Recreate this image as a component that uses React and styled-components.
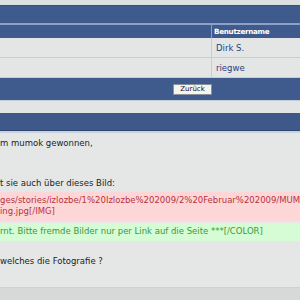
import React from "react";
import styled, { createGlobalStyle } from "styled-components";

const Global = createGlobalStyle`
  html, body { margin: 0; padding: 0; background: #e4e6e6; }
  body { width: 300px; height: 300px; overflow: hidden; font-family: "DejaVu Sans", Verdana, sans-serif; }
`;

const Page = styled.div`
  width: 300px;
  height: 300px;
  overflow: hidden;
  display: flex;
  flex-direction: column;
`;

const TopStrip = styled.div`
  height: 5px;
  background: #dde0e0;
  border-bottom: 1px solid #34507e;
`;

const BlueBar = styled.div`
  height: ${(p) => p.$h}px;
  background: #3f5a8c;
  border-bottom: ${(p) => (p.$line ? `${p.$line}px solid #8da1c4` : "none")};
`;

const TableHead = styled.div`
  display: grid;
  grid-template-columns: 211px 1fr;
  height: 13px;
  background: #3f5a8c;
`;

const HeadCell = styled.div`
  border-left: ${(p) => (p.$sep ? "1px solid #8da1c4" : "none")};
  color: #fff;
  font-weight: bold;
  font-size: 7.2px;
  letter-spacing: -0.3px;
  padding-left: 2px;
  display: flex;
  align-items: center;
`;

const Row = styled.div`
  display: grid;
  grid-template-columns: 211px 1fr;
  height: 19px;
  background: #e3e6e5;
  border-bottom: 1px solid #c9cdcd;
`;

const Cell = styled.div`
  border-left: ${(p) => (p.$sep ? "1px solid #c9cdcd" : "none")};
  color: #2b3f80;
  font-size: 8.5px;
  padding-left: 4px;
  display: flex;
  align-items: center;
`;

const ButtonRow = styled.div`
  height: 22px;
  background: #3f5a8c;
  display: flex;
  align-items: center;
  padding-left: 173px;
`;

const Button = styled.button`
  width: 39px;
  height: 11px;
  padding: 0;
  border: 1px solid #8a8f98;
  background: #f4f4f2;
  color: #111;
  font-family: "DejaVu Sans", Verdana, sans-serif;
  font-size: 7px;
  line-height: 9px;
`;

const Spacer = styled.div`
  height: 13px;
  background: #e3e5e5;
  border-top: 1px solid #c3ccd8;
  box-sizing: border-box;
`;

const PostHead = styled.div`
  height: 17px;
  background: #3d5889;
  border-bottom: 1px solid #2f4670;
`;

const PostLine = styled.div`
  height: 2px;
  background: #c8d1dd;
`;

const Content = styled.div`
  flex: 1;
  background: #e5e7e7;
  padding-top: 5px;
  font-size: 8.5px;
  color: #222;
`;

const Text = styled.div`
  white-space: nowrap;
  line-height: 11px;
  margin-top: ${(p) => p.$mt || 0}px;
`;

const Box = styled.div`
  background: ${(p) => p.$bg};
  color: ${(p) => p.$fg};
  padding: ${(p) => p.$pad};
  margin-top: ${(p) => p.$mt || 0}px;
  white-space: nowrap;
  overflow: hidden;
  line-height: 11px;
`;

const Bottom = styled.div`
  height: 12px;
  background: #d7d9d9;
  border-top: 1px solid #cfd2d2;
`;

export default function App() {
  return (
    <Page>
      <Global />
      <TopStrip />
      <BlueBar $h={17} $line={2} />
      <TableHead>
        <HeadCell />
        <HeadCell $sep>Benutzername</HeadCell>
      </TableHead>
      <Row>
        <Cell />
        <Cell $sep>Dirk S.</Cell>
      </Row>
      <Row>
        <Cell />
        <Cell $sep>riegwe</Cell>
      </Row>
      <ButtonRow>
        <Button>Zurück</Button>
      </ButtonRow>
      <Spacer />
      <PostHead />
      <PostLine />
      <Content>
        <Text>m mumok gewonnen,</Text>
        <Text $mt={29}>t sie auch über dieses Bild:</Text>
        <Box $bg="#fdd7d7" $fg="#b8323e" $pad="3px 0 4px" $mt={3}>
          <div>ges/stories/izlozbe/1%20Izlozbe%202009/2%20Februar%202009/MUMOK</div>
          <div>ing.jpg[/IMG]</div>
        </Box>
        <Box $bg="#d6fcd6" $fg="#3a9a3a" $pad="3px 0 4px" $mt={2}>
          rnt. Bitte fremde Bilder nur per Link auf die Seite ***[/COLOR]
        </Box>
        <Text $mt={15}>welches die Fotografie ?</Text>
      </Content>
      <Bottom />
    </Page>
  );
}
